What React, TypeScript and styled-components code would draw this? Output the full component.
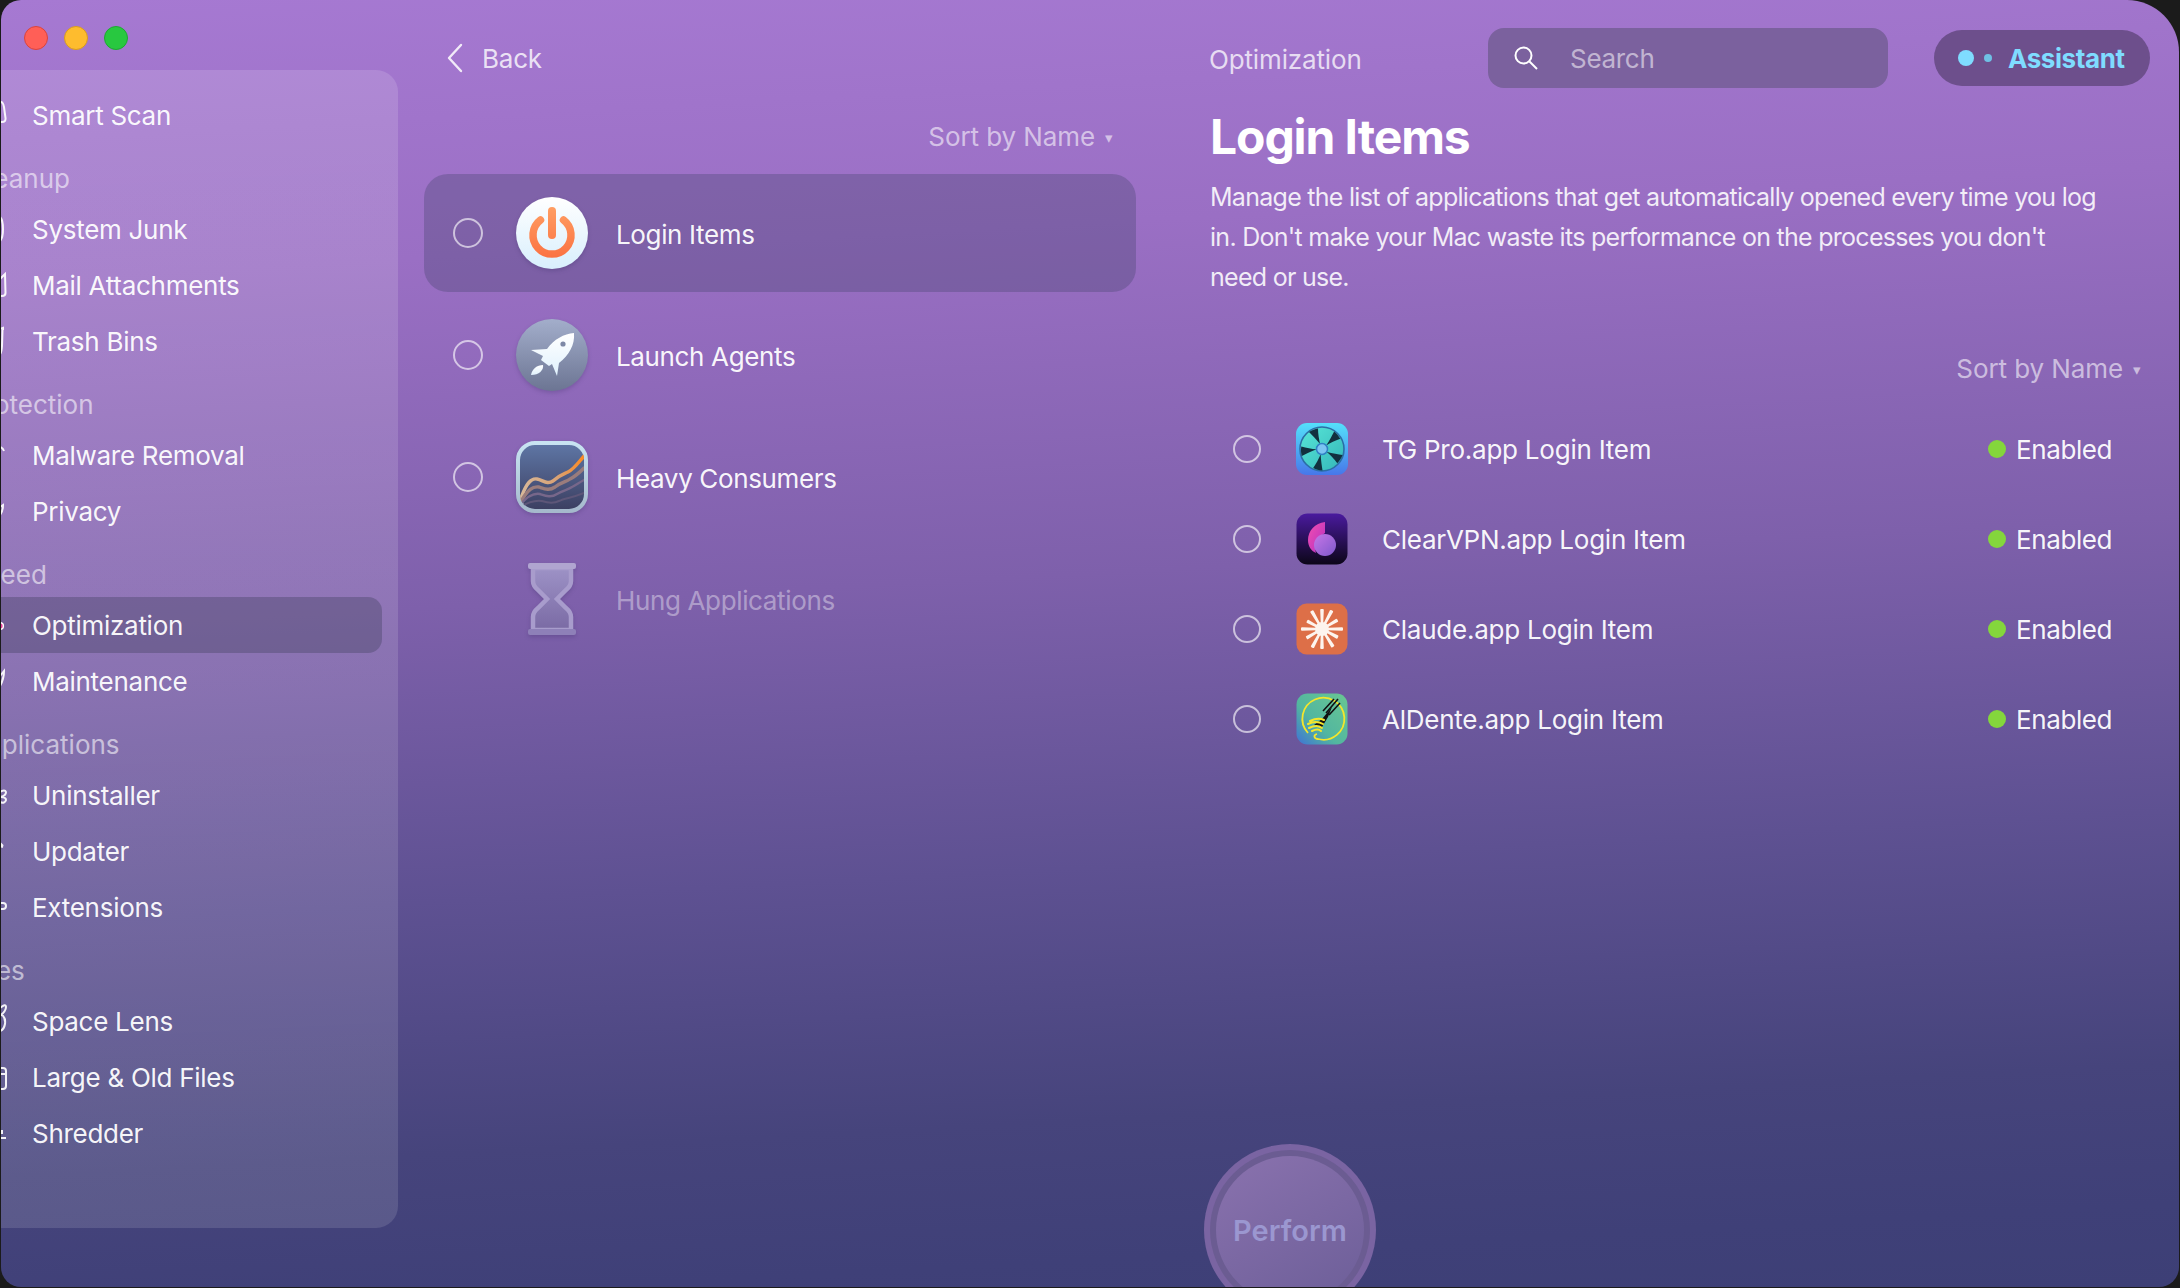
import React from 'react'
import styled, { createGlobalStyle } from 'styled-components'

const GlobalStyle = createGlobalStyle`
    html, body {
        margin: 0;
        padding: 0;
        background: #1b1b1b;
    }
    body {
        font-family: Inter, "Noto Sans", sans-serif;
        -webkit-font-smoothing: antialiased;
    }
`;

const Screen = styled.div`
    width: 2180px;
    height: 1288px;
    background: #1b1b1b;
    overflow: hidden;
`;

const Window = styled.div`
    position: relative;
    width: 2178px;
    height: 1287px;
    margin-left: 1px;
    display: flex;
    overflow: hidden;
    border-radius: 20px 52px 20px 20px;
    background: linear-gradient(177deg, #a679d2 0%, #9a6fc4 20%, #7e60ab 45%, #5e5192 66%, #46447c 84%, #3f4078 94%, #3d3f76 100%);
`;

const LeftColumn = styled.div`
    flex: 0 0 397px;
    display: flex;
    flex-direction: column;
`;

const Lights = styled.div`
    height: 70px;
    display: flex;
    align-items: flex-start;
    gap: 16px;
    padding: 26px 0 0 23px;
    box-sizing: border-box;
`;

const Light = styled.span<{ $fill: string; $edge: string }>`
    width: 24px;
    height: 24px;
    border-radius: 50%;
    box-sizing: border-box;
    background: ${p => p.$fill};
    border: 1px solid ${p => p.$edge};
`;

const Sidebar = styled.nav`
    width: 398px;
    height: 1158px;
    margin-left: -1px;
    padding-top: 17px;
    box-sizing: border-box;
    overflow: hidden;
    border-radius: 0 22px 22px 0;
    background: linear-gradient(177deg, rgba(255,255,255,0.14), rgba(255,255,255,0.12));
`;

const SideGroup = styled.div`
    margin-bottom: 10px;
`;

const SideLabel = styled.div`
    height: 48px;
    line-height: 52px;
    margin-left: -32px;
    font-size: 26px;
    color: rgba(255,255,255,0.58);
    white-space: nowrap;
`;

const SideItem = styled.div<{ $active?: boolean }>`
    height: 56px;
    margin-right: 16px;
    padding-top: 1px;
    box-sizing: border-box;
    display: flex;
    align-items: center;
    border-radius: 0 14px 14px 0;
    font-size: 26px;
    letter-spacing: -0.28px;
    color: rgba(255,255,255,0.96);
    background: ${p => (p.$active ? 'rgba(60,60,90,0.35)' : 'transparent')};
`;

const SideGlyph = styled.svg`
    flex: 0 0 32px;
    width: 32px;
    height: 40px;
    fill: none;
    stroke: rgba(255,255,255,0.92);
    stroke-width: 2;
`;

const Middle = styled.section`
    flex: 0 0 712px;
    margin-left: 26px;
`;

const BackBar = styled.div`
    height: 116px;
    display: flex;
    align-items: flex-start;
    gap: 19px;
    padding: 41px 0 0 23px;
    box-sizing: border-box;
    font-size: 26px;
    line-height: 36px;
    letter-spacing: -0.2px;
    color: rgba(255,255,255,0.8);
`;

const BackChevron = styled.svg`
    margin-top: 2px;
    fill: none;
    stroke: rgba(255,255,255,0.85);
    stroke-width: 2.4;
    stroke-linecap: round;
    stroke-linejoin: round;
`;

const SortRow = styled.div<{ $height: number; $right: number; $top: number }>`
    height: ${p => p.$height}px;
    padding: ${p => p.$top}px ${p => p.$right}px 0 0;
    box-sizing: border-box;
    display: flex;
    justify-content: flex-end;
    align-items: flex-start;
    gap: 10px;
    font-size: 26px;
    line-height: 42px;
    letter-spacing: -0.08px;
    color: rgba(255,255,255,0.58);
`;

const Caret = styled.span`
    font-size: 15px;
    line-height: 44px;
`;

const CategoryList = styled.div`
    display: flex;
    flex-direction: column;
    gap: 4px;
`;

const CategoryRow = styled.div<{ $selected?: boolean }>`
    height: 118px;
    display: flex;
    align-items: center;
    padding-left: 29px;
    border-radius: 24px;
    font-size: 26px;
    letter-spacing: -0.36px;
    color: rgba(255,255,255,0.96);
    background: ${p => (p.$selected ? 'rgba(60,62,100,0.3)' : 'transparent')};
`;

const CategoryName = styled.span<{ $muted?: boolean }>`
    margin-top: 2px;
    color: ${p => (p.$muted ? 'rgba(255,255,255,0.4)' : 'inherit')};
`;

const Radio = styled.span<{ $size: number }>`
    flex: 0 0 ${p => p.$size}px;
    height: ${p => p.$size}px;
    box-sizing: border-box;
    border-radius: 50%;
    border: 2px solid rgba(255,255,255,0.62);
`;

const RadioGap = styled.span`
    flex: 0 0 30px;
`;

const BigIcon = styled.svg`
    flex: 0 0 72px;
    width: 72px;
    height: 72px;
    margin: 0 28px 0 33px;
    overflow: visible;
    filter: drop-shadow(0 2px 2px rgba(40,30,80,0.22));
`;

const Detail = styled.section`
    flex: 1;
    margin-left: 74px;
    display: flex;
    flex-direction: column;
`;

const TopBar = styled.div`
    height: 116px;
    display: flex;
    align-items: flex-start;
    padding-top: 28px;
    box-sizing: border-box;
`;

const Crumb = styled.div`
    flex: 0 0 279px;
    margin-left: -1px;
    font-size: 26px;
    line-height: 64px;
    letter-spacing: -0.15px;
    color: rgba(255,255,255,0.75);
`;

const SearchBox = styled.div`
    width: 400px;
    height: 60px;
    display: flex;
    align-items: center;
    gap: 32px;
    padding-left: 26px;
    box-sizing: border-box;
    border-radius: 16px;
    font-size: 26px;
    letter-spacing: -0.3px;
    color: rgba(255,255,255,0.55);
    background: #7b619e;
`;

const AssistantPill = styled.div`
    width: 216px;
    height: 56px;
    margin: 2px 0 0 46px;
    display: flex;
    align-items: center;
    padding-left: 24px;
    box-sizing: border-box;
    border-radius: 28px;
    font-size: 26px;
    font-weight: 700;
    letter-spacing: -0.42px;
    color: #7fdcff;
    background: #6d4f8c;
`;

const Dot = styled.span<{ $size: number; $color: string; $gap: number }>`
    flex: 0 0 ${p => p.$size}px;
    height: ${p => p.$size}px;
    margin-right: ${p => p.$gap}px;
    border-radius: 50%;
    background: ${p => p.$color};
`;

const Title = styled.h1`
    margin: 0;
    height: 42px;
    font-size: 48px;
    line-height: 42px;
    font-weight: 700;
    letter-spacing: -1.1px;
    color: #fff;
`;

const Blurb = styled.p`
    margin: 19px 0 0;
    width: 890px;
    height: 120px;
    font-size: 25px;
    line-height: 40px;
    letter-spacing: -0.72px;
    color: rgba(255,255,255,0.88);
`;

const LoginList = styled.div`
    display: flex;
    flex-direction: column;
`;

const LoginRow = styled.div`
    height: 90px;
    display: flex;
    align-items: center;
    padding-left: 23px;
    font-size: 26px;
    letter-spacing: -0.24px;
    color: rgba(255,255,255,0.96);
`;

const AppIcon = styled.svg`
    flex: 0 0 52px;
    width: 52px;
    height: 52px;
    margin: 0 34px 0 35px;
`;

const AppName = styled.span`
    flex: 1;
`;

const Status = styled.span`
    display: flex;
    align-items: center;
    gap: 10px;
    padding-right: 67px;
    letter-spacing: -0.42px;
`;

const GreenDot = styled.span`
    width: 18px;
    height: 18px;
    border-radius: 50%;
    background: #84d63c;
`;

const PerformButton = styled.div`
    position: absolute;
    left: 1203px;
    top: 1144px;
    width: 172px;
    height: 172px;
    box-sizing: border-box;
    border-radius: 50%;
    padding: 6px;
    background: #7a64a2;
`;

const PerformRing = styled.div`
    width: 100%;
    height: 100%;
    box-sizing: border-box;
    border-radius: 50%;
    padding: 6px;
    background: #6b5c92;
`;

const PerformFace = styled.div`
    width: 100%;
    height: 100%;
    display: flex;
    align-items: center;
    justify-content: center;
    border-radius: 50%;
    font-size: 29px;
    font-weight: 600;
    color: #9b97d0;
    background: linear-gradient(150deg, #8a72ae, #6c5e98);
`;

const sideGlyphs: Record<string, string> = {
    smart: 'M0 7 L1 6 Q3 6 4 11 L5.5 22 Q6 26 2 26 L0 26',
    junk: 'M0 7 Q3 10 3 19 Q3 28 0 31',
    mail: 'M0 13 L5 8 L5.5 27 Q5.5 30 2 30 L0 30',
    trash: 'M0 7 L3 6 L3 8 M2.5 8 L2 24 Q1.5 31 0 32',
    malware: 'M0 11 Q3 12 4 15',
    privacy: 'M0 15 L3 13 Q3 19 0 23',
    maintenance: 'M0 14 L4 9 Q4 17 0 24',
    uninstaller: 'M0 16 Q5 13 6 16 Q6 20 0 21 Q6 21 6 24 Q5 28 0 26',
    updater: 'M0 11 L3 14 M0 14 L3 15',
    extensions: 'M0 15 L3 15 Q6 15 6 18 Q6 21 3 21 L0 21',
    lens: 'M0 12 Q6 14 5 22 Q4 28 0 29 M0 6 Q6 1 6 5 Q6 9 0 14',
    large: 'M0 10 L3 10 Q6 10 6 13 L6 28 Q6 31 3 31 L0 31 M0 16 L6 16',
    shredder: 'M0 19 L2 19 L2 16 M0 24 L6 24',
}

const sideSections = [
    { label: '', items: [{ name: 'Smart Scan', glyph: 'smart' }] },
    { label: 'Cleanup', items: [{ name: 'System Junk', glyph: 'junk' }, { name: 'Mail Attachments', glyph: 'mail' }, { name: 'Trash Bins', glyph: 'trash' }] },
    { label: 'Protection', items: [{ name: 'Malware Removal', glyph: 'malware' }, { name: 'Privacy', glyph: 'privacy' }] },
    { label: 'Speed', items: [{ name: 'Optimization', glyph: 'optimization' }, { name: 'Maintenance', glyph: 'maintenance' }] },
    { label: 'Applications', items: [{ name: 'Uninstaller', glyph: 'uninstaller' }, { name: 'Updater', glyph: 'updater' }, { name: 'Extensions', glyph: 'extensions' }] },
    { label: 'Files', items: [{ name: 'Space Lens', glyph: 'lens' }, { name: 'Large & Old Files', glyph: 'large' }, { name: 'Shredder', glyph: 'shredder' }] },
]

function PowerIcon() {
    return (
        <BigIcon viewBox="0 0 72 72">
            <defs>
                <linearGradient id="pw-bg" x1="0" y1="0" x2="0" y2="1">
                    <stop offset="0" stopColor="#ffffff" />
                    <stop offset="1" stopColor="#d8effd" />
                </linearGradient>
                <linearGradient id="pw-fg" gradientUnits="userSpaceOnUse" x1="0" y1="10" x2="0" y2="60">
                    <stop offset="0" stopColor="#ff9e63" />
                    <stop offset="1" stopColor="#fb7343" />
                </linearGradient>
            </defs>
            <circle cx="36" cy="36" r="36" fill="url(#pw-bg)" />
            <path d="M24.5 23 A19 19 0 1 0 47.5 23" fill="none" stroke="url(#pw-fg)" strokeWidth="7.5" strokeLinecap="round" />
            <rect x="32" y="10" width="8" height="32" rx="4" fill="url(#pw-fg)" />
        </BigIcon>
    )
}

function RocketIcon() {
    return (
        <BigIcon viewBox="0 0 72 72">
            <defs>
                <linearGradient id="rk-bg" x1="0" y1="0" x2="0" y2="1">
                    <stop offset="0" stopColor="#a3aecb" />
                    <stop offset="1" stopColor="#6c7593" />
                </linearGradient>
                <linearGradient id="rk-fg" x1="0" y1="0" x2="0" y2="1">
                    <stop offset="0" stopColor="#ffffff" />
                    <stop offset="1" stopColor="#e0f1fd" />
                </linearGradient>
            </defs>
            <circle cx="36" cy="36" r="36" fill="url(#rk-bg)" />
            <path d="M58 14 C48 15 38 20 31 30 L15 31 L27 37 L25 41 L33 47 L36 45 L41 57 L43 44 C53 36 59 26 58 14 Z" fill="url(#rk-fg)" />
            <path d="M15 56 C16 50 21 46 27 46 C28 51 23 56 15 56 Z" fill="url(#rk-fg)" />
            <circle cx="47" cy="25" r="2.6" fill="#7d88a6" />
        </BigIcon>
    )
}

function ChartIcon() {
    return (
        <BigIcon viewBox="0 0 72 72">
            <defs>
                <linearGradient id="ch-bg" x1="0" y1="0" x2="0" y2="1">
                    <stop offset="0" stopColor="#5f77a6" />
                    <stop offset="1" stopColor="#3b3e60" />
                </linearGradient>
                <linearGradient id="ch-line" x1="0" y1="0" x2="1" y2="0">
                    <stop offset="0" stopColor="#d8b99a" />
                    <stop offset="0.6" stopColor="#d9a173" />
                    <stop offset="1" stopColor="#ff8a1e" />
                </linearGradient>
                <linearGradient id="ch-edge" x1="0" y1="0" x2="0" y2="1">
                    <stop offset="0" stopColor="#c8e4f2" />
                    <stop offset="1" stopColor="#a5b9cc" />
                </linearGradient>
                <clipPath id="ch-clip">
                    <rect x="4" y="4" width="64" height="64" rx="14" />
                </clipPath>
            </defs>
            <rect x="2" y="2" width="68" height="68" rx="17" fill="url(#ch-bg)" stroke="url(#ch-edge)" strokeWidth="4" />
            <g clipPath="url(#ch-clip)" fill="none" strokeLinecap="round">
                <path d="M4 60 C10 42 15 37 21 38 C27 39 31 44 37 40 C43 34 48 33 52 31 C58 28 62 22 68 15" stroke="url(#ch-line)" strokeWidth="3.4" />
                <path d="M4 62 C12 48 17 45 23 46 C29 48 33 50 39 46 C45 41 50 41 54 38 C60 35 64 31 68 27" stroke="#9a7c7c" strokeWidth="3.4" />
                <path d="M4 64 C12 54 18 52 24 53 C30 55 35 57 41 53 C47 49 52 49 56 46 C60 44 64 41 68 39" stroke="#77678a" strokeWidth="2.4" />
                <path d="M4 66 C14 60 20 59 26 60 C32 62 37 63 43 60 C49 57 56 57 68 52" stroke="#5d5678" strokeWidth="2" />
            </g>
        </BigIcon>
    )
}

function HourglassIcon() {
    return (
        <BigIcon viewBox="0 0 72 72">
            <defs>
                <linearGradient id="hg-fill" x1="0" y1="0" x2="0" y2="1">
                    <stop offset="0" stopColor="#9d92c6" />
                    <stop offset="1" stopColor="#7a6aa4" />
                </linearGradient>
            </defs>
            <path d="M17 5 V18 Q17 23 22 27 L31 36 L22 45 Q17 49 17 54 V67 H55 V54 Q55 49 50 45 L41 36 L50 27 Q55 23 55 18 V5 Z" fill="url(#hg-fill)" stroke="#a89ccc" strokeWidth="4.5" />
            <rect x="12" y="0" width="48" height="6" rx="2" fill="#b0a5d0" />
            <rect x="12" y="66" width="48" height="6" rx="2" fill="#8e80b8" />
        </BigIcon>
    )
}

function FanIcon() {
    const gaps = [0, 72, 144, 216, 288]
    return (
        <AppIcon viewBox="0 0 52 52">
            <defs>
                <linearGradient id="fan-bg" x1="0" y1="0" x2="0" y2="1">
                    <stop offset="0" stopColor="#54e0fb" />
                    <stop offset="1" stopColor="#4777ea" />
                </linearGradient>
                <linearGradient id="fan-blade" x1="0" y1="0" x2="1" y2="1">
                    <stop offset="0" stopColor="#58e6d8" />
                    <stop offset="1" stopColor="#34b6b8" />
                </linearGradient>
            </defs>
            <rect width="52" height="52" rx="11" fill="url(#fan-bg)" />
            <circle cx="26" cy="26" r="22" fill="url(#fan-blade)" stroke="#2b6ea6" strokeWidth="1.6" />
            {gaps.map(a => (
                <path key={a} d="M24 21 C20 16 16 12 13 9 C16 7 19 6 22 5.5 C22 11 23 16 24 21 Z" fill="#12303f" transform={`rotate(${a} 26 26)`} />
            ))}
            <circle cx="26" cy="26" r="5.5" fill="#7cc4f2" stroke="#2f7fc4" strokeWidth="1.5" />
        </AppIcon>
    )
}

function ClearVpnIcon() {
    return (
        <AppIcon viewBox="0 0 52 52">
            <defs>
                <linearGradient id="vpn-bg" x1="0" y1="0" x2="0" y2="1">
                    <stop offset="0" stopColor="#4a1a9e" />
                    <stop offset="1" stopColor="#0c0618" />
                </linearGradient>
                <linearGradient id="vpn-pink" x1="0" y1="0" x2="1" y2="1">
                    <stop offset="0" stopColor="#f24fb0" />
                    <stop offset="1" stopColor="#b52fc2" />
                </linearGradient>
                <linearGradient id="vpn-ball" x1="0" y1="0" x2="1" y2="1">
                    <stop offset="0" stopColor="#c676e6" />
                    <stop offset="1" stopColor="#7e58cc" />
                </linearGradient>
            </defs>
            <rect x="0.5" y="0.5" width="51" height="51" rx="11" fill="url(#vpn-bg)" />
            <path d="M29 9 C19 10 12 18 12 27 C12 33 15 38 20 40 C18 33 20 26 29 20 Z" fill="url(#vpn-pink)" />
            <circle cx="29" cy="32" r="11" fill="url(#vpn-ball)" />
        </AppIcon>
    )
}

function ClaudeIcon() {
    const rays = [[0, 20], [28, 17], [58, 20], [90, 19], [118, 20], [150, 17], [180, 20], [208, 16], [240, 20], [270, 19], [298, 20], [330, 17]]
    return (
        <AppIcon viewBox="0 0 52 52">
            <rect x="0.5" y="0.5" width="51" height="51" rx="10" fill="#dd6f48" />
            <circle cx="26" cy="26" r="7" fill="#fdf4ee" />
            {rays.map(([a, len]) => (
                <path key={a} d={`M26 26 L${26 + len} 25.2 L${26 + len} 26.8 Z`} fill="#fdf4ee" stroke="#fdf4ee" strokeWidth="2" strokeLinejoin="round" transform={`rotate(${a} 26 26)`} />
            ))}
        </AppIcon>
    )
}

function AlDenteIcon() {
    return (
        <AppIcon viewBox="0 0 52 52">
            <defs>
                <linearGradient id="al-bg" x1="1" y1="0" x2="0" y2="1">
                    <stop offset="0" stopColor="#69c792" />
                    <stop offset="0.6" stopColor="#52b6a0" />
                    <stop offset="1" stopColor="#3f72d6" />
                </linearGradient>
            </defs>
            <rect x="0.5" y="0.5" width="51" height="51" rx="11" fill="url(#al-bg)" />
            <path d="M12 40 A21 21 0 1 1 22 46 C18 46 17 42 21 41" fill="none" stroke="#f4e62c" strokeWidth="1.8" />
            <path d="M42 6 L30 20 M38 6 L27 18 M44 10 L33 22" stroke="#111" strokeWidth="1.6" fill="none" />
            <path d="M36 14 L26 26 L18 32 L26 34 L32 24 Z" fill="#111" />
            <path d="M14 28 Q22 24 28 27 M12 31 Q20 27 27 31 M13 35 Q21 31 26 35 M16 38 Q22 35 25 38" stroke="#f4e62c" strokeWidth="2" fill="none" strokeLinecap="round" />
        </AppIcon>
    )
}

const logins = [
    { name: 'TG Pro.app Login Item', Icon: FanIcon },
    { name: 'ClearVPN.app Login Item', Icon: ClearVpnIcon },
    { name: 'Claude.app Login Item', Icon: ClaudeIcon },
    { name: 'AlDente.app Login Item', Icon: AlDenteIcon },
]

export default function App() {
    return (
        <Screen>
            <GlobalStyle />
            <Window>
                <LeftColumn>
                    <Lights>
                        <Light $fill="#ff5f57" $edge="#d9443e" />
                        <Light $fill="#febc2e" $edge="#d99c1f" />
                        <Light $fill="#28c840" $edge="#1ea832" />
                    </Lights>
                    <Sidebar>
                        {sideSections.map(section => (
                            <SideGroup key={section.label || 'top'}>
                                {section.label && <SideLabel>{section.label}</SideLabel>}
                                {section.items.map(item => (
                                    <SideItem key={item.name} $active={item.name === 'Optimization'}>
                                        <SideGlyph viewBox="0 0 32 40">
                                            {item.glyph === 'optimization'
                                                ? <circle cx="0" cy="20" r="3.4" fill="#e8409a" stroke="#fff" strokeWidth="1.4" />
                                                : <path d={sideGlyphs[item.glyph]} />}
                                        </SideGlyph>
                                        {item.name}
                                    </SideItem>
                                ))}
                            </SideGroup>
                        ))}
                    </Sidebar>
                </LeftColumn>

                <Middle>
                    <BackBar>
                        <BackChevron width="16" height="30" viewBox="0 0 16 30">
                            <path d="M14 2 L2 15 L14 28" />
                        </BackChevron>
                        Back
                    </BackBar>
                    <SortRow $height={58} $right={23} $top={0}>Sort by Name <Caret>▾</Caret></SortRow>
                    <CategoryList>
                        <CategoryRow $selected>
                            <Radio $size={30} /><PowerIcon /><CategoryName>Login Items</CategoryName>
                        </CategoryRow>
                        <CategoryRow>
                            <Radio $size={30} /><RocketIcon /><CategoryName>Launch Agents</CategoryName>
                        </CategoryRow>
                        <CategoryRow>
                            <Radio $size={30} /><ChartIcon /><CategoryName>Heavy Consumers</CategoryName>
                        </CategoryRow>
                        <CategoryRow>
                            <RadioGap /><HourglassIcon /><CategoryName $muted>Hung Applications</CategoryName>
                        </CategoryRow>
                    </CategoryList>
                </Middle>

                <Detail>
                    <TopBar>
                        <Crumb>Optimization</Crumb>
                        <SearchBox>
                            <svg width="24" height="24" viewBox="0 0 24 24" fill="none" stroke="#fff" strokeWidth="2">
                                <circle cx="9.5" cy="9.5" r="8" />
                                <path d="M15.5 15.5 L23 23" />
                            </svg>
                            Search
                        </SearchBox>
                        <AssistantPill>
                            <Dot $size={16} $color="#7fdcff" $gap={10} />
                            <Dot $size={8} $color="#6fc0e4" $gap={16} />
                            Assistant
                        </AssistantPill>
                    </TopBar>
                    <Title>Login Items</Title>
                    <Blurb>
                        Manage the list of applications that get automatically opened every time you log in. Don't make your Mac waste its performance on the processes you don't need or use.
                    </Blurb>
                    <SortRow $height={107} $right={38} $top={51}>Sort by Name <Caret>▾</Caret></SortRow>
                    <LoginList>
                        {logins.map(({ name, Icon }) => (
                            <LoginRow key={name}>
                                <Radio $size={28} />
                                <Icon />
                                <AppName>{name}</AppName>
                                <Status><GreenDot />Enabled</Status>
                            </LoginRow>
                        ))}
                    </LoginList>
                </Detail>

                <PerformButton>
                    <PerformRing>
                        <PerformFace>Perform</PerformFace>
                    </PerformRing>
                </PerformButton>
            </Window>
        </Screen>
    )
}
